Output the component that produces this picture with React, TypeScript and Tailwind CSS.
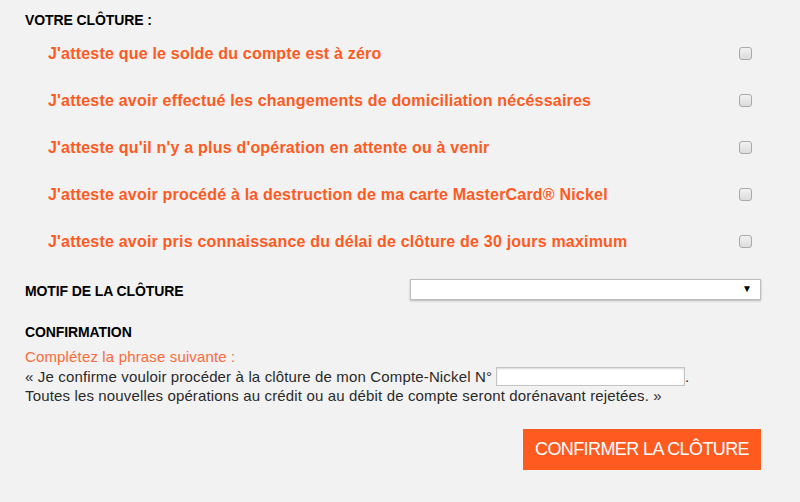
import React from "react";

const items = [
  "J'atteste que le solde du compte est à zéro",
  "J'atteste avoir effectué les changements de domiciliation nécéssaires",
  "J'atteste qu'il n'y a plus d'opération en attente ou à venir",
  "J'atteste avoir procédé à la destruction de ma carte MasterCard® Nickel",
  "J'atteste avoir pris connaissance du délai de clôture de 30 jours maximum",
];

function Box() {
  return (
    <span className="block w-[13px] h-[13px] rounded-[3px] border border-[#a9a9a9] bg-gradient-to-b from-[#f2f2f2] to-[#dcdcdc]" />
  );
}

export default function App() {
  return (
    <div
      className="w-[800px] h-[502px] bg-[#f2f2f2] overflow-hidden"
      style={{ fontFamily: '"Liberation Sans", Arial, sans-serif' }}
    >
      <div className="pl-[25px] pr-[39px] pt-[12px]">
        <div className="text-[14px] font-bold text-black leading-[16px] tracking-[-0.1px]">VOTRE CLÔTURE :</div>
        <div className="mt-[2px] flex flex-col">
          {items.map((t, i) => (
            <div key={i} className="h-[47px] flex items-center justify-between pl-[23px] pr-[9px]">
              <span className="text-[16px] font-bold text-[#ff5a1f] tracking-[0.2px]">{t}</span>
              <Box />
            </div>
          ))}
        </div>
        <div className="mt-[13px] h-[22px] flex items-center justify-between">
          <span className="text-[14px] font-bold text-black tracking-[-0.1px] translate-y-[2px]">MOTIF DE LA CLÔTURE</span>
          <div className="w-[351px] h-[21px] bg-white border border-[#bdbdbd] shadow-[0_1px_2px_rgba(0,0,0,0.25)] flex items-center justify-end pr-[8px]">
            <span className="text-[10px] text-black leading-none">▼</span>
          </div>
        </div>
        <div className="mt-[24px] text-[14px] font-bold text-black tracking-[-0.1px] leading-[16px]">CONFIRMATION</div>
        <div className="mt-[7px] text-[15px] leading-[19.5px] tracking-[0.15px]">
          <div className="text-[#ff6a3a]">Complétez la phrase suivante :</div>
          <div className="text-[#2a2a2a] flex items-center">
            <span>« Je confirme vouloir procéder à la clôture de mon Compte-Nickel N°</span>
            <span className="ml-[4px] inline-block w-[189px] h-[19px] bg-white border border-[#c4c4c4] shadow-[inset_0_1px_2px_rgba(0,0,0,0.15)]" />
            <span>.</span>
          </div>
          <div className="text-[#2a2a2a]">Toutes les nouvelles opérations au crédit ou au débit de compte seront dorénavant rejetées. »</div>
        </div>
        <div className="mt-[23px] flex justify-end">
          <button className="w-[238px] h-[41px] bg-[#ff5a1f] text-white text-[18px] tracking-[-0.6px]">CONFIRMER LA CLÔTURE</button>
        </div>
      </div>
    </div>
  );
}
